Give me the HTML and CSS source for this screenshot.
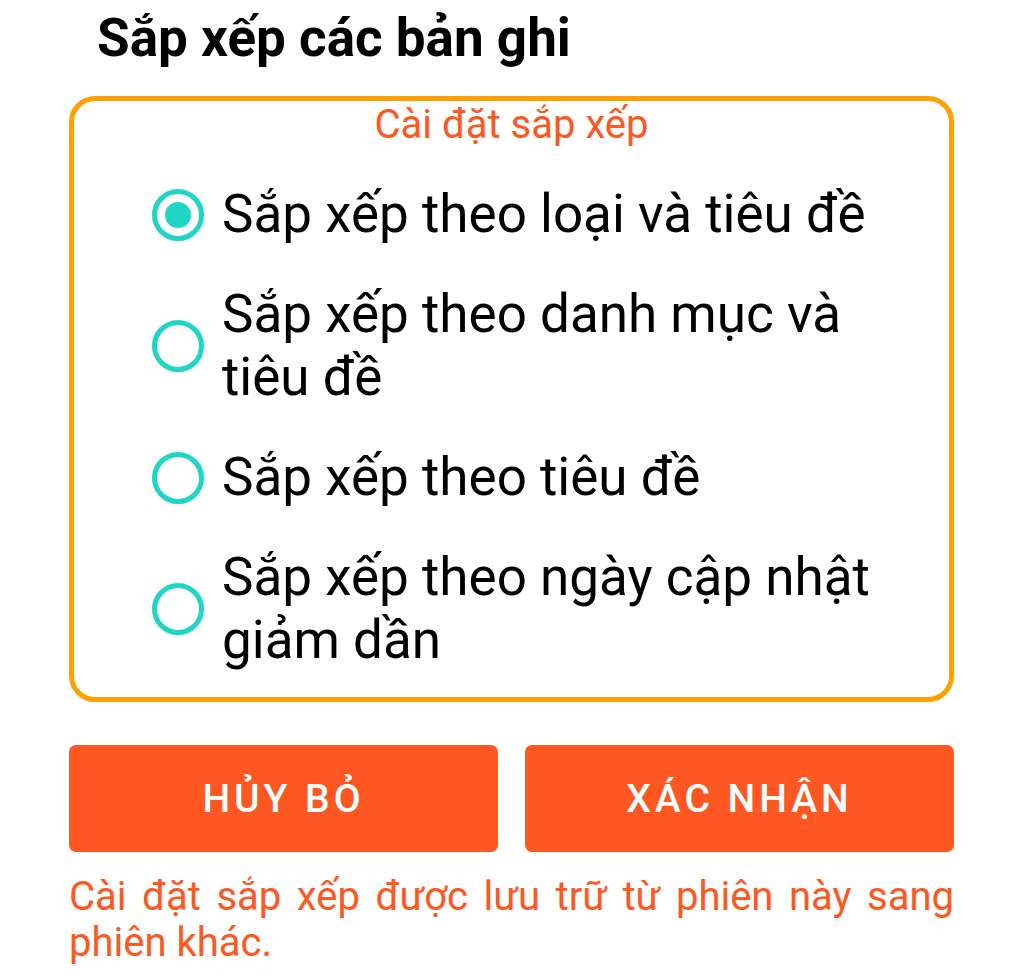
FILE: index.html
```html
<!DOCTYPE html>
<html lang="vi">
<head>
    <meta charset="UTF-8">
    <meta name="viewport" content="width=device-width, initial-scale=1.0">
    <title>Sắp xếp các bản ghi</title>
    <link rel="stylesheet" href="styles.css">
</head>
<body>
    <div class="dialog">
        <h1 class="dialog-title">Sắp xếp các bản ghi</h1>

        <div class="sort-box">
            <div class="sort-legend">Cài đặt sắp xếp</div>
            <ul class="sort-options">
                <li class="sort-option checked">
                    <span class="radio"></span>
                    <span class="option-label">Sắp xếp theo loại và tiêu đề</span>
                </li>
                <li class="sort-option">
                    <span class="radio"></span>
                    <span class="option-label">Sắp xếp theo danh mục và tiêu đề</span>
                </li>
                <li class="sort-option">
                    <span class="radio"></span>
                    <span class="option-label">Sắp xếp theo tiêu đề</span>
                </li>
                <li class="sort-option">
                    <span class="radio"></span>
                    <span class="option-label">Sắp xếp theo ngày cập nhật giảm dần</span>
                </li>
            </ul>
        </div>

        <div class="actions">
            <button class="btn">HỦY BỎ</button>
            <button class="btn">XÁC NHẬN</button>
        </div>

        <p class="note">Cài đặt sắp xếp được lưu trữ từ phiên này sang phiên khác.</p>
    </div>
</body>
</html>
```

FILE: styles.css
```css
/* Estilos generales */
body {
    font-family: Roboto, "Liberation Sans", sans-serif;
    margin: 0;
    padding: 0;
    background-color: #fff;
    color: #000;
}

.dialog {
    padding: 0 70px 0 69px;
}

.dialog-title {
    margin: 0;
    padding: 7px 0 0 28px;
    font-size: 53px;
    font-weight: 700;
    line-height: 62px;
}

.sort-box {
    margin-top: 27px;
    border: 5px solid #ffa000;
    border-radius: 26px;
    padding: 0 20px 25px 78px;
}

.sort-legend {
    color: #ff5722;
    font-size: 40px;
    line-height: 47px;
    text-align: center;
    margin-left: -58px;
}

.sort-options {
    list-style: none;
    margin: 35px 0 0 0;
    padding: 0;
    display: flex;
    flex-direction: column;
    gap: 37px;
}

.sort-option {
    display: flex;
    align-items: center;
    gap: 18px;
}

.option-label {
    font-size: 53px;
    line-height: 63px;
}

/* Botón de radio dibujado con bordes */
.radio {
    flex: none;
    width: 52px;
    height: 52px;
    box-sizing: border-box;
    border: 5px solid #1fd5c3;
    border-radius: 50%;
    display: flex;
    align-items: center;
    justify-content: center;
}

.sort-option.checked .radio::after {
    content: "";
    width: 26px;
    height: 26px;
    border-radius: 50%;
    background-color: #1fd5c3;
}

.actions {
    margin-top: 43px;
    display: grid;
    grid-template-columns: 1fr 1fr;
    gap: 27px;
}

.btn {
    height: 107px;
    border: none;
    border-radius: 7px;
    background-color: #ff5722;
    color: #fff;
    font-family: inherit;
    font-size: 39px;
    font-weight: 500;
    letter-spacing: 4px;
}

.note {
    margin: 22px 0 0 0;
    color: #ff5722;
    font-size: 40px;
    line-height: 46px;
    text-align: justify;
}
```
